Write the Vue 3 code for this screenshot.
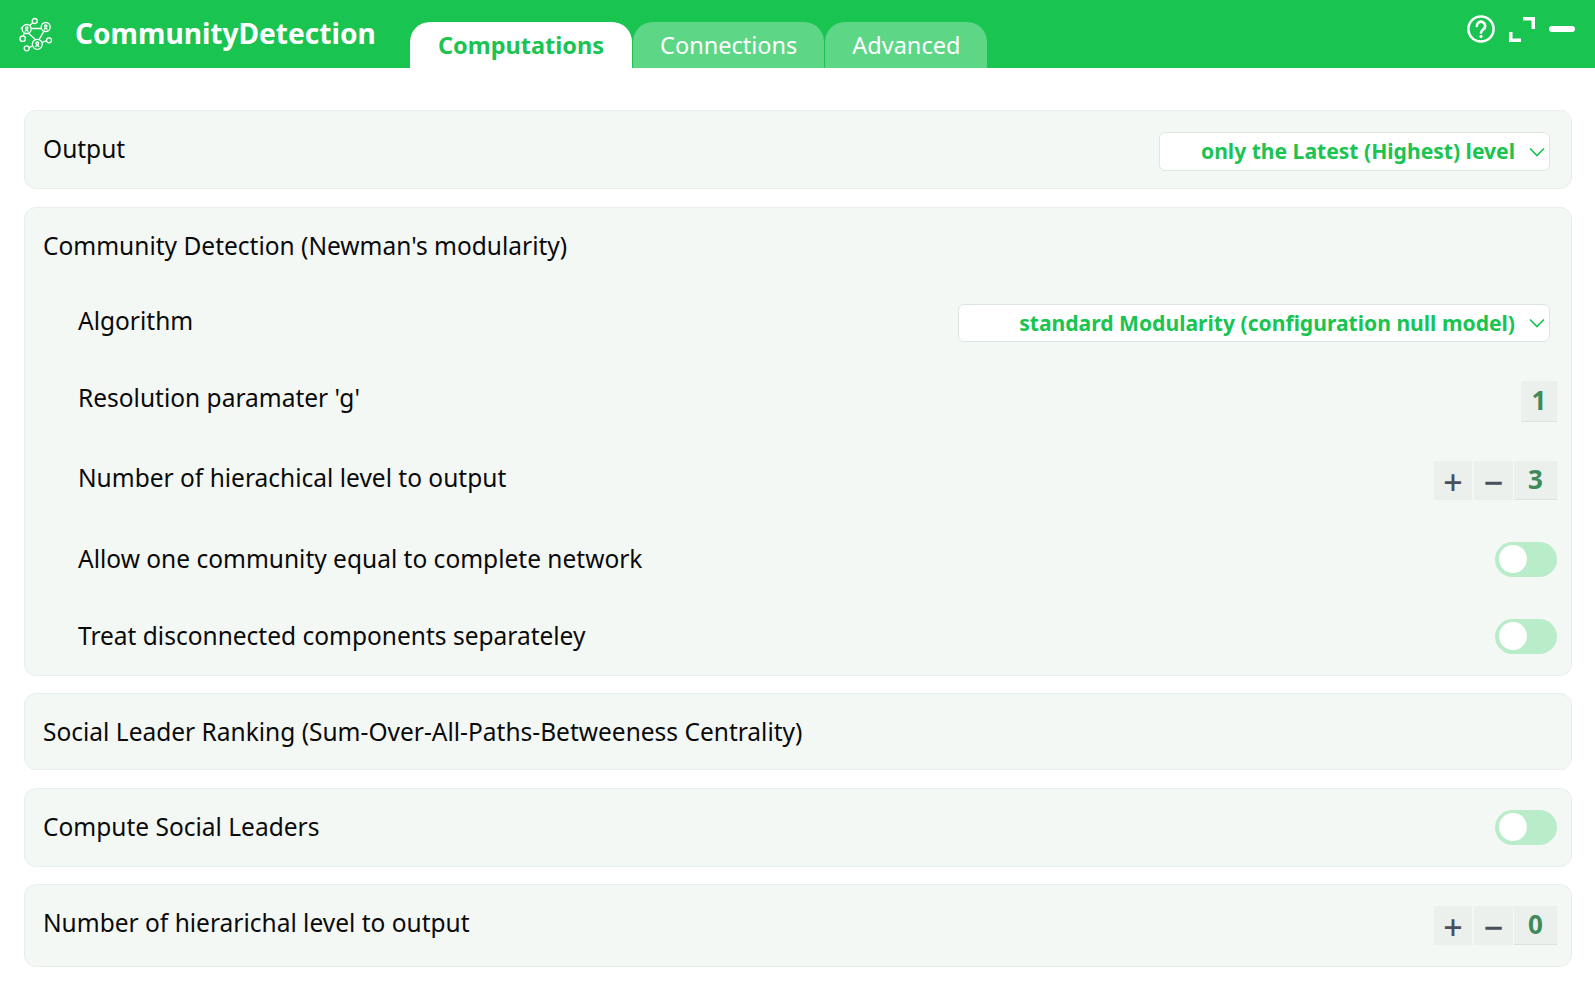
<script setup>
const tabs = [
  { label: 'Computations', active: true },
  { label: 'Connections', active: false },
  { label: 'Advanced', active: false },
]
</script>

<template>
  <div class="app">
    <header class="header">
      <div class="brand">
        <svg class="logo" viewBox="0 0 36 36" fill="none" stroke="#fff" stroke-width="1.3">
          <circle cx="16.7" cy="5" r="2.5" />
          <circle cx="8.7" cy="13" r="4.5" />
          <circle cx="27.7" cy="11" r="4.5" />
          <circle cx="19.3" cy="28.3" r="5" />
          <circle cx="4.7" cy="22.7" r="2.7" />
          <circle cx="8.7" cy="32.3" r="2.5" />
          <circle cx="31" cy="24.3" r="2.5" />
          <path d="M13 12.5H23.2M10.5 17.2 17.4 23.6M26 15.2 21 23.6M14.8 6.7 11.5 9.5M6.6 17 5 20M14.5 30 11 31.6M24 26.5 28.7 24.6M4.2 13 2.8 11.5" />
          <path d="M7 15.5a1.8 1.8 0 0 1 3.4 0M26 13.5a1.8 1.8 0 0 1 3.4 0M17.4 31a2 2 0 0 1 3.8 0" />
          <circle cx="8.7" cy="12" r="1.2" />
          <circle cx="27.7" cy="10" r="1.2" />
          <circle cx="19.3" cy="27.3" r="1.3" />
        </svg>
        <span class="title">CommunityDetection</span>
      </div>
      <nav class="tabs">
        <div v-for="t in tabs" :key="t.label" class="tab" :class="{ active: t.active }">{{ t.label }}</div>
      </nav>
      <div class="actions">
        <svg class="ic-help" viewBox="0 0 28 28" fill="none" stroke="#fff" stroke-width="2.5">
          <circle cx="14" cy="14" r="12.6" />
          <path d="M9.8 10.9a4.2 4.2 0 1 1 6.5 3.5c-1.5 1-2.3 1.6-2.3 3.3" stroke-linecap="round" stroke-width="2.7" />
          <circle cx="14" cy="21.4" r="1.6" fill="#fff" stroke="none" />
        </svg>
        <svg class="ic-expand" viewBox="0 0 26 25" fill="none" stroke="#fff" stroke-width="3.5">
          <path d="M14 1.75H24.25V12M1.75 15V23.25H12" />
        </svg>
        <div class="ic-min"></div>
      </div>
    </header>

    <main class="content">
      <section class="card card-output">
        <span class="label lift-1">Output</span>
        <div class="select sel-output">
          <span class="sel-text">only the Latest (Highest) level</span>
          <svg class="chev" viewBox="0 0 16 10" fill="none" stroke="#19c451" stroke-width="1.7"><path d="M1 1.5 8 8.5l7-7" /></svg>
        </div>
      </section>

      <section class="card card-group">
        <div class="group-title">Community Detection (Newman's modularity)</div>
        <div class="row row-alg">
          <span class="label lift-2">Algorithm</span>
          <div class="select sel-alg">
            <span class="sel-text">standard Modularity (configuration null model)</span>
            <svg class="chev" viewBox="0 0 16 10" fill="none" stroke="#19c451" stroke-width="1.7"><path d="M1 1.5 8 8.5l7-7" /></svg>
          </div>
        </div>
        <div class="row row-res">
          <span class="label lift-4">Resolution paramater 'g'</span>
          <div class="value solo"><span>1</span></div>
        </div>
        <div class="row row-num">
          <span class="label lift-3">Number of hierachical level to output</span>
          <div class="stepper">
            <button class="step plus">+</button>
            <button class="step minus">−</button>
            <div class="value"><span>3</span></div>
          </div>
        </div>
        <div class="row row-tog">
          <span class="label lift-1">Allow one community equal to complete network</span>
          <div class="toggle"><i></i></div>
        </div>
        <div class="row row-tog">
          <span class="label lift-1">Treat disconnected components separateley</span>
          <div class="toggle"><i></i></div>
        </div>
      </section>

      <section class="card card-leader">
        <span class="label">Social Leader Ranking (Sum-Over-All-Paths-Betweeness Centrality)</span>
      </section>

      <section class="card card-output">
        <span class="label lift-1">Compute Social Leaders</span>
        <div class="toggle tog-inset"><i></i></div>
      </section>

      <section class="card card-last">
        <span class="label lift-3">Number of hierarichal level to output</span>
        <div class="stepper">
          <button class="step plus">+</button>
          <button class="step minus">−</button>
          <div class="value"><span>0</span></div>
        </div>
      </section>
    </main>
  </div>
</template>

<style scoped>
.app {
  font-family: "Noto Sans", sans-serif;
  color: #0a0a0a;
}
.header {
  height: 68px;
  background: #19c451;
  display: flex;
  align-items: flex-end;
}
.brand {
  display: flex;
  align-items: center;
  align-self: flex-start;
  height: 68px;
  padding-left: 18px;
  width: 391px;
  box-sizing: border-box;
}
.logo {
  width: 36px;
  height: 36px;
  flex: none;
}
.title {
  margin-left: 21px;
  font-size: 28.1px;
  font-weight: 700;
  color: #fff;
  line-height: 1;
  margin-bottom: 1px;
}
.tabs {
  display: flex;
  margin-left: 19px;
  gap: 1px;
}
.tab {
  height: 46px;
  padding: 0 27px;
  border-radius: 20px 20px 0 0;
  background: #5dd685;
  color: #fff;
  font-size: 23.5px;
  line-height: 46px;
}
.tab.active {
  background: #fff;
  color: #19c451;
  font-weight: 700;
  padding: 0 28px;
}
.actions {
  margin-left: auto;
  align-self: flex-start;
  display: flex;
  align-items: center;
  height: 28px;
  margin-top: 15px;
  padding-right: 20px;
}
.ic-help {
  width: 28px;
  height: 28px;
}
.ic-expand {
  width: 26px;
  height: 25px;
  margin-left: 14px;
}
.ic-min {
  width: 26px;
  height: 6px;
  border-radius: 3px;
  background: #fff;
  margin-left: 14px;
}
.content {
  padding: 42px 23px 0 24px;
  display: flex;
  flex-direction: column;
  gap: 18px;
}
.card {
  background: #f4f8f5;
  border: 1px solid #e9eeeb;
  border-radius: 12px;
  box-sizing: border-box;
  padding: 0 14px 0 18px;
}
.card-output {
  height: 79px;
  display: flex;
  align-items: center;
  justify-content: space-between;
  padding-right: 21px;
}
.card-group {
  height: 469px;
  padding-top: 19px;
}
.card-leader {
  height: 77px;
  margin-top: -1px;
  display: flex;
  align-items: center;
}
.card-last {
  height: 83px;
  margin-top: -1px;
  display: flex;
  align-items: center;
  justify-content: space-between;
}
.label {
  font-size: 24.5px;
  line-height: 34px;
}
.lift-1 {
  padding-bottom: 2px;
}
.lift-2 {
  padding-bottom: 4px;
}
.lift-3 {
  padding-bottom: 6px;
}
.lift-4 {
  padding-bottom: 8px;
}
.group-title {
  font-size: 24.5px;
  line-height: 38px;
}
.row {
  display: flex;
  align-items: center;
  justify-content: space-between;
  padding-left: 35px;
}
.row-alg {
  height: 38px;
  margin-top: 39px;
  padding-right: 7px;
}
.row-res {
  height: 41px;
  margin-top: 39px;
}
.row-num {
  height: 39px;
  margin-top: 39px;
}
.row-tog {
  height: 35px;
  margin-top: 42px;
}
.select {
  box-sizing: border-box;
  background: #fff;
  border: 1px solid #dde6e1;
  border-radius: 6px;
  display: flex;
  align-items: center;
  justify-content: flex-end;
  padding-right: 4px;
  color: #19c451;
  font-size: 21.1px;
  font-weight: 700;
}
.sel-text {
  padding-bottom: 2px;
}
.sel-output {
  width: 391px;
  height: 39px;
  margin-top: 4px;
}
.sel-alg {
  width: 592px;
  height: 38px;
}
.chev {
  width: 16px;
  height: 10px;
  margin-left: 14px;
  flex: none;
}
.value {
  width: 43px;
  height: 39px;
  box-sizing: border-box;
  background: #ebf0ed;
  border-bottom: 1px solid #d9e4de;
  color: #3f8a5b;
  font-size: 26px;
  font-weight: 700;
  display: flex;
  align-items: center;
  justify-content: center;
  padding-bottom: 2px;
}
.value.solo {
  width: 36px;
  height: 41px;
}
.stepper {
  display: flex;
  gap: 2px;
}
.step {
  height: 39px;
  border: 0;
  padding: 3px 0 0;
  background: #ebf0ed;
  color: #4a4f5c;
  font-family: "Noto Sans", sans-serif;
  font-size: 34px;
  font-weight: 500;
  line-height: 36px;
}
.step.plus {
  width: 38px;
}
.step.minus {
  width: 39px;
  font-weight: 600;
}
.stepper .value {
  margin-left: -1px;
}
.toggle {
  width: 62px;
  height: 35px;
  border-radius: 18px;
  background: #b9ecc9;
  position: relative;
  flex: none;
}
.toggle i {
  position: absolute;
  left: 4px;
  top: 3px;
  width: 28px;
  height: 28px;
  border-radius: 50%;
  background: #fff;
}
.tog-inset {
  margin-right: -7px;
}
</style>

<style>
html, body {
  background: #fff;
}
</style>
